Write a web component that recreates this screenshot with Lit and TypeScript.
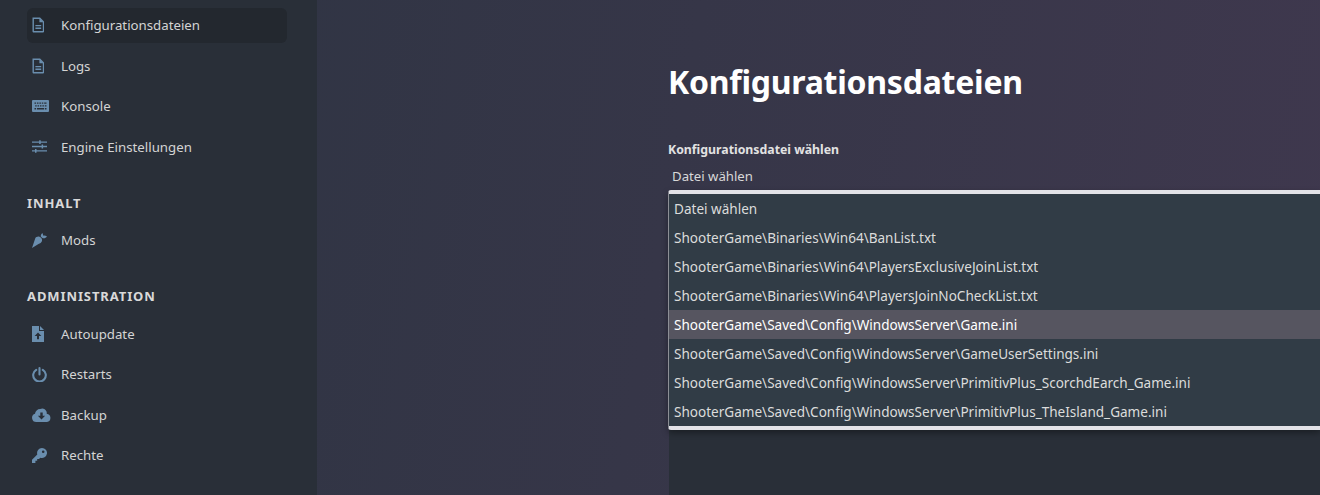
import { LitElement, html, css, svg } from "lit";
import { customElement } from "lit/decorators.js";

const doc = svg`<path fill="none" stroke="currentColor" stroke-width="1.4" d="M1.2 1.2h6.6l3.7 3.7v9.4a.5.5 0 0 1-.5.5H1.7a.5.5 0 0 1-.5-.5z"/><path fill="currentColor" d="M7.4 1.2l4.1 4.1H7.4zM3.4 8h5.8v1.3H3.4zM3.4 10.6h5.8v1.3H3.4z"/>`;
const icons: Record<string, { w: number; h: number; b: unknown }> = {
  doc: { w: 12, h: 16, b: doc },
  keyboard: { w: 17, h: 12, b: svg`<path fill="currentColor" fill-rule="evenodd" d="M1 0h15a1 1 0 0 1 1 1v10a1 1 0 0 1-1 1H1a1 1 0 0 1-1-1V1a1 1 0 0 1 1-1zM2.5 2.5v1.3h1.6V2.5zM5 2.5v1.3h1.5V2.5zM7.4 2.5v1.3h1.5V2.5zM9.8 2.5v1.3h1.5V2.5zM12.2 2.5v1.3h2.3V2.5zM3.2 5.2v1.3h1.5V5.2zM5.6 5.2v1.3h1.5V5.2zM8 5.2v1.3h1.5V5.2zM10.4 5.2v1.3h1.5V5.2zM12.8 5.2v1.3h1.7V5.2zM2.5 8v1.4h1.6V8zM5 8v1.4h7V8zM12.8 8v1.4h1.7V8z"/>` },
  sliders: { w: 15, h: 13, b: svg`<path fill="currentColor" d="M0 1.4h7.2V.2h1.5v1.2H15v1.4H8.7V4H7.2V2.8H0zM0 5.8h9.6V4.6h1.5v1.2H15v1.4h-3.9v1.2H9.6V7.2H0zM0 10.2h3V9h1.5v1.2H15v1.4H4.5v1.2H3v-1.2H0z"/>` },
  carrot: { w: 15, h: 15, b: svg`<path fill="currentColor" d="M0 15 3.200 5.500C3.800 4 6 3.200 7.500 3.800 9.500 4.500 10.500 6.500 10 8 9.500 9.500 8 10.500 6.500 11z"/><path fill="currentColor" d="M8.800 3.500C8.600 2 9.500.8 10.300 0c.7.8.9 1.700.7 2.600C12.200 2.200 13.800 2.500 15 3.500c-1 1.400-2.500 2-3.900 1.700C10.200 5 9.300 4.400 8.800 3.500z"/>` },
  fileup: { w: 12, h: 16, b: svg`<path fill="currentColor" fill-rule="evenodd" d="M0 0h7v5h5v11H0zM6 6.500 2.600 10H5v3.200h2V10h2.400zM8 0l4 4H8z"/>` },
  power: { w: 15, h: 15, b: svg`<path fill="none" stroke="currentColor" stroke-width="2.100" stroke-linecap="round" d="M4.200 2.800a6.300 6.300 0 1 0 6.600 0M7.500 1.100v6.300"/>` },
  cloud: { w: 19, h: 14, b: svg`<path fill="currentColor" fill-rule="evenodd" d="M4.300 14A4.200 4.200 0 0 1 3 5.800 5.200 5.200 0 0 1 8.200 1c1.900-1.200 5-.8 6.300 2.500.3 1 .3 1.700.2 2.200A4.200 4.200 0 0 1 15 14zM8.300 4.500v3.300H5.900L9.500 11.500l3.600-3.700h-2.400V4.500z"/>` },
  key: { w: 15, h: 15, b: svg`<path fill="currentColor" fill-rule="evenodd" d="M10 0a5 5 0 1 1-1.700 9.700L7 11H5.200v1.800H3.400V15H0v-3.200l5.300-5.300A5 5 0 0 1 10 0zm1.200 2.500a1.300 1.300 0 1 0 0 2.600 1.300 1.300 0 0 0 0-2.600z"/>` },
};

const groups = [
  { items: [["doc", "Konfigurationsdateien", true], ["doc", "Logs"], ["keyboard", "Konsole"], ["sliders", "Engine Einstellungen"]] },
  { title: "INHALT", items: [["carrot", "Mods"]] },
  { title: "ADMINISTRATION", items: [["fileup", "Autoupdate"], ["power", "Restarts"], ["cloud", "Backup"], ["key", "Rechte"]] },
];

const options = [
  "Datei wählen",
  "ShooterGame\\Binaries\\Win64\\BanList.txt",
  "ShooterGame\\Binaries\\Win64\\PlayersExclusiveJoinList.txt",
  "ShooterGame\\Binaries\\Win64\\PlayersJoinNoCheckList.txt",
  "ShooterGame\\Saved\\Config\\WindowsServer\\Game.ini",
  "ShooterGame\\Saved\\Config\\WindowsServer\\GameUserSettings.ini",
  "ShooterGame\\Saved\\Config\\WindowsServer\\PrimitivPlus_ScorchdEarch_Game.ini",
  "ShooterGame\\Saved\\Config\\WindowsServer\\PrimitivPlus_TheIsland_Game.ini",
];

@customElement("app-root")
export class AppRoot extends LitElement {
  static styles = css`
    :host { display: block; width: 1320px; height: 495px; overflow: hidden; font-family: "Noto Sans", sans-serif; }
    .page { display: flex; height: 495px; background: linear-gradient(100deg, #2d3442 0%, #3f384e 100%); }
    .side { width: 317px; flex: none; background: #292f38; padding: 7.5px 30px 0 27px; box-sizing: border-box; }
    .group { display: flex; flex-direction: column; gap: 5.5px; margin-bottom: 29.5px; }
    .title { font-size: 13px; font-weight: 700; letter-spacing: 0.9px; color: #d9d9d9; line-height: 18px; margin: 0 0 5.5px; }
    .item { display: flex; align-items: center; height: 35px; border-radius: 6px; padding-left: 5px; color: #d4d4d4; font-size: 13.25px; }
    .item.on { background: #23282f; }
    .ico { width: 29px; flex: none; display: flex; color: #6a8eae; }
    .main { flex: 1; padding: 0 0 0 351px; display: flex; flex-direction: column; position: relative; }
    h1 { margin: 57px 0 0; font-size: 32px; line-height: 50px; font-weight: 700; color: #fff; letter-spacing: -.25px; white-space: nowrap; }
    .label { margin-top: 34px; font-size: 12.3px; line-height: 18px; font-weight: 700; color: #e2e2e2; white-space: nowrap; }
    .value { padding-left: 4px; margin-top: 6px; font-size: 13.2px; line-height: 22px; height: 22px; color: #d8d8d8; }
    .panel { flex: 1; margin-top: 8px; margin-left: 1px; background: #292f38; }
    .list { position: absolute; left: 351px; right: 0; top: 190px; box-sizing: border-box; height: 240px; background: #313c46; border-top: 4px solid #e3e3e8; border-bottom: 4px solid #e3e3e8; border-left: 1px solid #8d8f96; border-radius: 3px 0 0 3px; box-shadow: 0 3px 6px rgba(0,0,0,.35); color: #dcdcdc; font-size: 13.55px; }
    .opt { box-sizing: border-box; height: 29px; line-height: 29px; padding: 1px 0 0 5px; white-space: nowrap; }
    .opt.sel { background: #565560; color: #fff; }
  `;
  render() {
    return html`<div class="page">
      <nav class="side">
        ${groups.map((g) => html`<div class="group">
          ${g.title ? html`<div class="title">${g.title}</div>` : ""}
          ${g.items.map((it) => {
            const ic = icons[it[0] as string];
            return html`<div class="item ${it[2] ? "on" : ""}"><span class="ico"><svg width=${ic.w} height=${ic.h} viewBox="0 0 ${ic.w} ${ic.h}">${ic.b}</svg></span>${it[1]}</div>`;
          })}
        </div>`)}
      </nav>
      <main class="main">
        <h1>Konfigurationsdateien</h1>
        <div class="label">Konfigurationsdatei wählen</div>
        <div class="value">Datei wählen</div>
        <div class="panel"></div>
        <div class="list">${options.map((o, i) => html`<div class="opt ${i === 4 ? "sel" : ""}">${o}</div>`)}</div>
      </main>
    </div>`;
  }
}
